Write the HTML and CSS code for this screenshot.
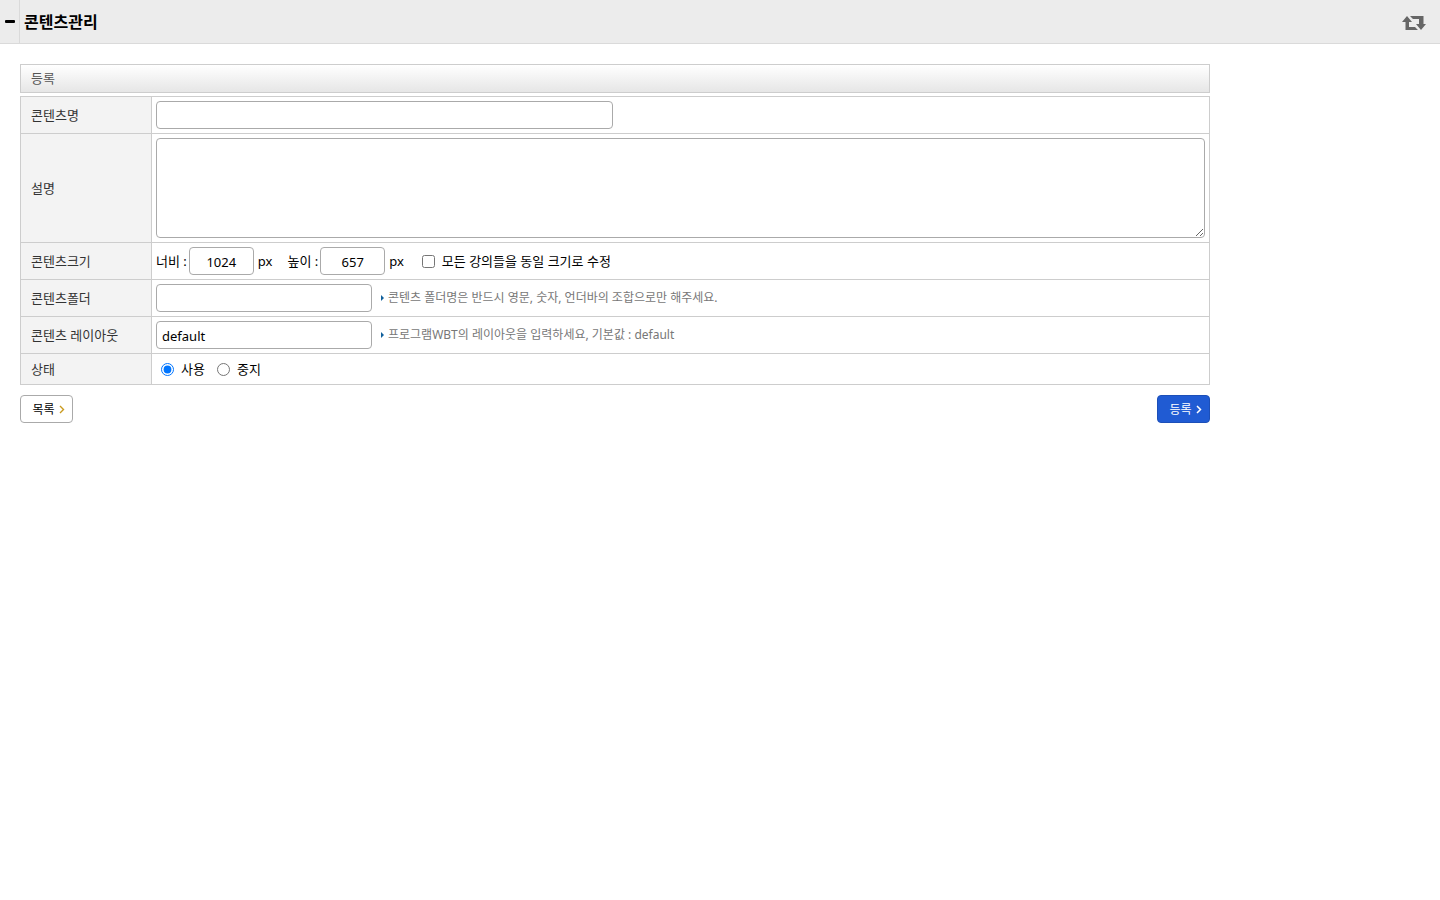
FILE: index.html
```html
<!DOCTYPE html>
<html lang="ko">
  <head>
    <meta charset="UTF-8" />
    <meta name="viewport" content="width=device-width, initial-scale=1.0" />
    <title>콘텐츠관리</title>
    <link rel="stylesheet" href="styles.css">
  </head>
  <body>
    <header class="topbar">
      <button type="button" class="toggle" aria-label="메뉴 접기">
        <svg width="10" height="4" viewBox="0 0 10 4"><rect width="10" height="3" rx="1" fill="#000" /></svg>
      </button>
      <h1>콘텐츠관리</h1>
      <button type="button" class="reload" aria-label="새로고침">
        <svg width="24" height="18" viewBox="0 0 24 18" fill="#666">
          <path d="M5 3 L10 9 H7 V14 H13 L16 17 H3.5 V9 H0 Z" />
          <path d="M19 17 L24 11 H21.5 V3 H8 L11 6 H17 V11 H14 Z" />
        </svg>
      </button>
    </header>

    <main class="content">
      <h2 class="form-title">등록</h2>

      <form id="content-form">
        <table class="form-table">
          <tr>
            <th><label for="content_nm">콘텐츠명</label></th>
            <td><input type="text" id="content_nm" name="content_nm" class="input-long" /></td>
          </tr>
          <tr>
            <th><label for="description">설명</label></th>
            <td><textarea id="description" name="description"></textarea></td>
          </tr>
          <tr>
            <th>콘텐츠크기</th>
            <td>
              <div class="field">
                <label for="content_width">너비 :</label>
                <input type="text" id="content_width" name="content_width" class="input-num" value="1024" />
                <span class="unit">px</span>
                <label for="content_height">높이 :</label>
                <input type="text" id="content_height" name="content_height" class="input-num" value="657" />
                <span class="unit">px</span>
                <input type="checkbox" id="size_all" name="size_all" />
                <label for="size_all">모든 강의들을 동일 크기로 수정</label>
              </div>
            </td>
          </tr>
          <tr>
            <th><label for="folder">콘텐츠폴더</label></th>
            <td>
              <div class="field">
                <input type="text" id="folder" name="folder" class="input-mid" />
                <span class="hint">콘텐츠 폴더명은 반드시 영문, 숫자, 언더바의 조합으로만 해주세요.</span>
              </div>
            </td>
          </tr>
          <tr>
            <th><label for="layout">콘텐츠 레이아웃</label></th>
            <td>
              <div class="field">
                <input type="text" id="layout" name="layout" class="input-mid" value="default" />
                <span class="hint">프로그램WBT의 레이아웃을 입력하세요, 기본값 : default</span>
              </div>
            </td>
          </tr>
          <tr>
            <th>상태</th>
            <td>
              <div class="field status">
                <input type="radio" id="status1" name="status" value="1" checked />
                <label for="status1">사용</label>
                <input type="radio" id="status0" name="status" value="0" />
                <label for="status0">중지</label>
              </div>
            </td>
          </tr>
        </table>

        <div class="buttons">
          <button type="button" class="btn">
            목록
            <svg width="6" height="9" viewBox="0 0 6 9"><path d="M1 1 L4.5 4.5 L1 8" fill="none" stroke="#c99a1e" stroke-width="1.4" /></svg>
          </button>
          <button type="submit" class="btn btn-primary">
            등록
            <svg width="6" height="9" viewBox="0 0 6 9"><path d="M1 1 L4.5 4.5 L1 8" fill="none" stroke="#fff" stroke-width="1.5" /></svg>
          </button>
        </div>
      </form>
    </main>
  </body>
</html>
```
FILE: styles.css
```css
* {
  box-sizing: border-box;
}

body {
  margin: 0;
  background: #fff;
  color: #000;
}

body,
input,
textarea,
button {
  font-family: "Noto Sans", "Noto Sans CJK KR", sans-serif;
  font-size: 13px;
  line-height: 20px;
}

/* Top bar */
.topbar {
  display: flex;
  align-items: center;
  height: 44px;
  background: #ececec;
  border-bottom: 1px solid #dadada;
}

.topbar h1 {
  flex: 1;
  margin: 0;
  padding-left: 4px;
  font-size: 16px;
  line-height: 24px;
}

.toggle,
.reload {
  display: flex;
  align-items: center;
  justify-content: center;
  padding: 0;
  border: none;
  background: none;
  cursor: pointer;
}

.toggle {
  width: 20px;
  height: 100%;
  border-right: 1px solid #dadada;
}

.reload {
  margin-right: 14px;
}

/* Form */
.content {
  max-width: 1230px;
  padding: 20px;
}

.form-title {
  margin: 0 0 3px;
  padding: 4px 10px;
  border: 1px solid #cdcdcd;
  background: linear-gradient(#fff, #e6e6e6);
  color: #555;
  font-size: 13px;
  font-weight: normal;
  line-height: 19px;
}

.form-table {
  width: 100%;
  border-collapse: collapse;
}

.form-table th,
.form-table td {
  border: 1px solid #cdcdcd;
  padding: 4px;
}

.form-table th {
  width: 131px;
  padding: 4px 10px;
  background: #f3f3f3;
  color: #333;
  font-weight: normal;
  text-align: left;
}

input[type="text"],
textarea {
  display: block;
  border: 1px solid #aaa;
  border-radius: 4px;
  background: #fff;
}

input[type="text"] {
  height: 28px;
  padding: 2px 5px 0;
}

textarea {
  width: 100%;
  height: 100px;
  padding: 5px;
}

.input-long {
  width: 457px;
}

.input-mid {
  width: 216px;
}

.field .input-num {
  width: 65px;
  margin: 0 4px 0 2px;
  text-align: center;
}

.field {
  display: flex;
  align-items: center;
}

.unit {
  margin-right: 15px;
}

input[type="checkbox"] {
  width: 13px;
  height: 13px;
  margin: 0 7px 0 3px;
}

.hint {
  display: flex;
  align-items: center;
  margin-left: 9px;
  color: #777;
  font-size: 12px;
}

.hint::before {
  content: "";
  margin-right: 4px;
  border: solid transparent;
  border-width: 3px 0 3px 3px;
  border-left-color: #11609c;
}

.status {
  padding: 1px 0;
}

.status input {
  width: 13px;
  height: 13px;
  margin: 0 7px 0 5px;
}

.status label {
  margin-right: 7px;
}

/* Buttons */
.buttons {
  display: flex;
  justify-content: space-between;
  margin-top: 10px;
}

.btn {
  display: flex;
  align-items: center;
  justify-content: center;
  gap: 4px;
  width: 53px;
  height: 28px;
  padding: 1px 3px 0 7px;
  border: 1px solid #aaa;
  border-radius: 4px;
  background: #fff;
  color: #000;
  font-size: 12px;
  cursor: pointer;
}

.btn-primary {
  border-color: #1c4fb8;
  background: #205bd3;
  color: #fff;
}
```
